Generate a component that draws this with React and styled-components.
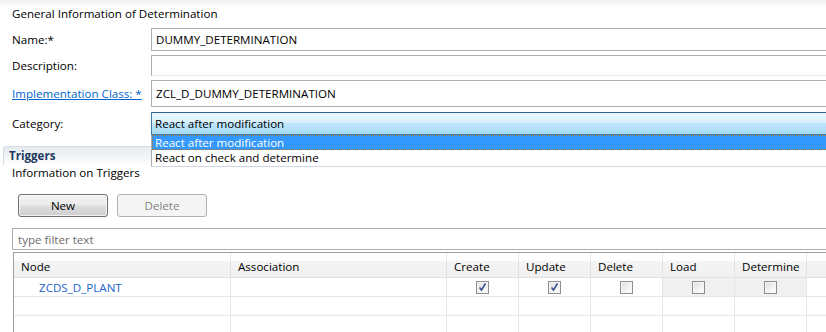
import React from "react";
import styled, { createGlobalStyle } from "styled-components";

const GlobalStyle = createGlobalStyle`
    body {
        margin: 0;
        background: #fff;
        font-family: "Open Sans", "Noto Sans", sans-serif;
        font-size: 11.6px;
        color: #000;
    }
`;

const columns = [
    { key: "node", title: "Node", width: 217 },
    { key: "assoc", title: "Association", width: 216 },
    { key: "create", title: "Create", width: 72 },
    { key: "update", title: "Update", width: 72 },
    { key: "delete", title: "Delete", width: 72 },
    { key: "load", title: "Load", width: 72 },
    { key: "determine", title: "Determine", width: 72 },
];

const rows = [
    { node: "ZCDS_D_PLANT", create: true, update: true, delete: false, load: false, determine: false },
    null,
    null,
];

function CheckBox({ checked }) {
    return (
        <Box>
            {checked && (
                <svg width="11" height="11" viewBox="0 0 11 11">
                    <path
                        d="M2.5 5.5 L4.5 8 L8.5 1.5"
                        fill="none"
                        stroke="#3f5597"
                        strokeWidth="1.6"
                    />
                </svg>
            )}
        </Box>
    );
}

function App() {
    return (
        <Page>
            <GlobalStyle />
            <TitleBar>General Information of Determination</TitleBar>
            <Form>
                <Label>Name:*</Label>
                <Field $h={23}>DUMMY_DETERMINATION</Field>
                <Label>Description:</Label>
                <Field $h={21} $light />
                <Label>
                    <Link>Implementation Class: *</Link>
                </Label>
                <Field $h={27}>ZCL_D_DUMMY_DETERMINATION</Field>
                <Label>Category:</Label>
                <ComboWrap>
                    <Combo>React after modification</Combo>
                    <DropList>
                        <DropItem $selected>React after modification</DropItem>
                        <DropItem>React on check and determine</DropItem>
                    </DropList>
                </ComboWrap>
            </Form>

            <Section>
                <SectionBar>Triggers</SectionBar>
                <Info>Information on Triggers</Info>
                <Buttons>
                    <Button>New</Button>
                    <Button disabled>Delete</Button>
                </Buttons>
                <Filter>type filter text</Filter>
                <Table>
                    <HeadRow>
                        {columns.map((c) => (
                            <HeadCell key={c.key} $w={c.width}>
                                {c.title}
                            </HeadCell>
                        ))}
                        <HeadCell $w={30} $last />
                    </HeadRow>
                    {rows.map((r, i) => (
                        <Row key={i}>
                            {columns.map((c) => {
                                const grey = r && (c.key === "load" || c.key === "determine");
                                return (
                                    <Cell
                                        key={c.key}
                                        $w={c.width}
                                        $grey={grey}
                                        $center={c.key !== "node" && c.key !== "assoc"}
                                    >
                                        {r && c.key === "node" && <NodeText>{r.node}</NodeText>}
                                        {r && c.key !== "node" && c.key !== "assoc" && (
                                            <CheckBox checked={r[c.key]} />
                                        )}
                                    </Cell>
                                );
                            })}
                            <Cell $w={30} $last />
                        </Row>
                    ))}
                </Table>
            </Section>
        </Page>
    );
}

const Page = styled.div`
    width: 826px;
    height: 332px;
    overflow: hidden;
    background: #fff;
`;

const TitleBar = styled.div`
    height: 22px;
    box-sizing: border-box;
    padding: 6px 0 0 12px;
    line-height: 16px;
    background: linear-gradient(180deg, #eef0f3 0px, #fafbfc 6px, #fff 10px);
`;

const Form = styled.div`
    display: grid;
    grid-template-columns: 139px 1fr;
    grid-template-rows: 23px 21px 27px 24px;
    row-gap: 4px;
    padding-left: 12px;
    margin-top: 6px;
`;

const Label = styled.div`
    display: flex;
    align-items: center;
`;

const Link = styled.span`
    color: #0066cc;
    text-decoration: underline;
`;

const Field = styled.div`
    height: ${(p) => p.$h}px;
    box-sizing: border-box;
    border: 1px solid #abadb3;
    border-bottom-color: ${(p) => (p.$light ? "#e3e9ef" : "#abadb3")};
    border-right: none;
    padding-left: 4px;
    display: flex;
    align-items: center;
    margin-right: -2px;
`;

const ComboWrap = styled.div`
    position: relative;
    z-index: 2;
    margin-top: 1px;
`;

const Combo = styled.div`
    height: 23px;
    box-sizing: border-box;
    border: 1px solid #3c7fb1;
    border-top-color: #2c628b;
    border-right: none;
    padding-left: 3px;
    display: flex;
    align-items: center;
    background: linear-gradient(
        180deg,
        #eaf6fd 0%,
        #d9f0fc 45%,
        #bee6fd 50%,
        #a7d9f5 100%
    );
    margin-right: -2px;
`;

const DropList = styled.div`
    position: absolute;
    top: 23px;
    left: 0;
    right: -2px;
    background: #fff;
    border-left: 1px solid #abadb3;
    border-bottom: 1px solid #d0d7e2;
`;

const DropItem = styled.div`
    height: 15px;
    line-height: 14px;
    padding-left: 2px;
    box-sizing: border-box;
    background: ${(p) => (p.$selected ? "#3399ff" : "#fff")};
    color: ${(p) => (p.$selected ? "#fff" : "#000")};
    border: 1px dotted ${(p) => (p.$selected ? "#b5703a" : "transparent")};
    border-right: none;
    & + & {
        height: 16px;
    }
`;

const Section = styled.div`
    margin-top: 11px;
    margin-left: 3px;
`;

const SectionBar = styled.div`
    height: 19px;
    box-sizing: border-box;
    border-top: 1px solid #d6dce4;
    border-left: 1px solid #d6dce4;
    border-top-left-radius: 3px;
    padding-left: 5px;
    line-height: 17px;
    font-weight: 700;
    color: #1c3a5e;
    background: linear-gradient(180deg, #e6ebf1 0%, #f3f5f8 60%, #fff 100%);
`;

const Info = styled.div`
    padding-left: 9px;
    line-height: 16px;
`;

const Buttons = styled.div`
    display: flex;
    gap: 9px;
    padding-left: 15px;
    margin-top: 13px;
`;

const Button = styled.button`
    width: 90px;
    height: 23px;
    font: inherit;
    border-radius: 3px;
    border: 1px solid #707070;
    color: #000;
    background: linear-gradient(180deg, #f2f2f2 0%, #ebebeb 48%, #dddddd 52%, #cfcfcf 100%);
    box-shadow: inset 0 0 0 1px rgba(255, 255, 255, 0.7);
    padding: 0;
    &:disabled {
        border-color: #adb2b5;
        background: #f4f4f4;
        color: #838383;
        box-shadow: none;
    }
`;

const Filter = styled.div`
    margin: 11px 0 0 9px;
    height: 22px;
    box-sizing: border-box;
    border: 1px solid #abadb3;
    border-right: none;
    padding-left: 5px;
    display: flex;
    align-items: center;
    color: #6d6d6d;
`;

const Table = styled.div`
    margin: 2px 0 0 10px;
    border-top: 1px solid #a0a0a0;
    border-left: 1px solid #a0a0a0;
`;

const HeadRow = styled.div`
    display: flex;
    height: 24px;
    background: linear-gradient(180deg, #fff 0%, #fff 30%, #f4f4f4 35%, #f1f1f1 100%);
    border-bottom: 1px solid #e2e2e2;
`;

const HeadCell = styled.div`
    flex: 0 0 ${(p) => p.$w}px;
    box-sizing: border-box;
    border-right: ${(p) => (p.$last ? "none" : "1px solid #e4e4e4")};
    padding: 3px 0 0 7px;
    display: flex;
    align-items: center;
`;

const Row = styled.div`
    display: flex;
    height: 18px;
    border-bottom: 1px solid #e6e6e6;
`;

const Cell = styled.div`
    flex: 0 0 ${(p) => p.$w}px;
    box-sizing: border-box;
    border-right: ${(p) => (p.$last ? "none" : "1px solid #e6e6e6")};
    background: ${(p) => (p.$grey ? "#f0f0f0" : "#fff")};
    display: flex;
    align-items: center;
    justify-content: ${(p) => (p.$center ? "center" : "flex-start")};
`;

const NodeText = styled.span`
    color: #1a66cc;
    padding-left: 25px;
`;

const Box = styled.div`
    width: 13px;
    height: 13px;
    box-sizing: border-box;
    border: 1px solid #8f8f8f;
    background: linear-gradient(135deg, #dcdcdc 0%, #f4f4f4 60%, #fff 100%);
    box-shadow: inset 0 0 0 1px #f4f4f4;
    display: flex;
    align-items: center;
    justify-content: center;
`;

export default App;
